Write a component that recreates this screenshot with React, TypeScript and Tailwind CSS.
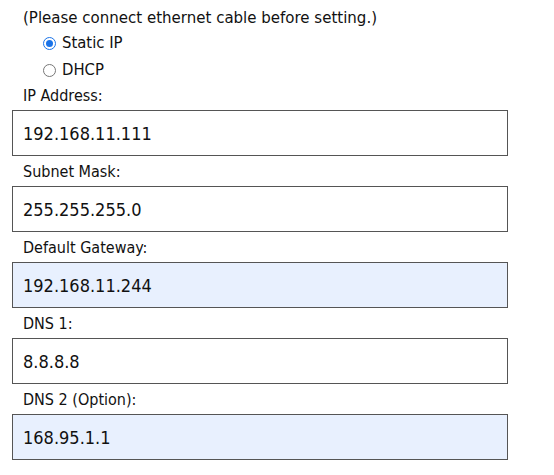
import React from "react";

const font = { fontFamily: '"DejaVu Sans Condensed", "Liberation Sans", sans-serif' };

function Field({ label, value, filled }: { label: string; value: string; filled?: boolean }) {
  return (
    <div className="flex flex-col">
      <div className="h-[30px] pl-[11px] pt-[6px] text-[16px] leading-[20px] text-[#111]">{label}</div>
      <div
        className={`h-[46px] w-[496px] border border-[#555] flex items-center pl-[10px] text-[18px] text-[#111] ${
          filled ? "bg-[#e8f0fe]" : "bg-white"
        }`}
      >
        {value}
      </div>
    </div>
  );
}

function Radio({ checked, label }: { checked?: boolean; label: string }) {
  return (
    <div className="flex items-center h-[27px] pl-[31px] gap-[6px] text-[16.5px] text-[#111]">
      {checked ? (
        <span className="w-[13px] h-[13px] rounded-full border border-[#1a73e8] flex items-center justify-center">
          <span className="w-[7px] h-[7px] rounded-full bg-[#1a73e8]" />
        </span>
      ) : (
        <span className="w-[13px] h-[13px] rounded-full border border-[#777] bg-white" />
      )}
      <span>{label}</span>
    </div>
  );
}

export default function App() {
  return (
    <div className="w-[554px] h-[475px] bg-white pl-[12px] pt-[4px]" style={font}>
      <div className="pl-[11px] text-[16.7px] leading-[26px] text-[#111]">
        (Please connect ethernet cable before setting.)
      </div>
      <Radio checked label="Static IP" />
      <Radio label="DHCP" />
      <div className="-mt-[4px]">
        <Field label="IP Address:" value="192.168.11.111" />
        <Field label="Subnet Mask:" value="255.255.255.0" />
        <Field label="Default Gateway:" value="192.168.11.244" filled />
        <Field label="DNS 1:" value="8.8.8.8" />
        <Field label="DNS 2 (Option):" value="168.95.1.1" filled />
      </div>
    </div>
  );
}
